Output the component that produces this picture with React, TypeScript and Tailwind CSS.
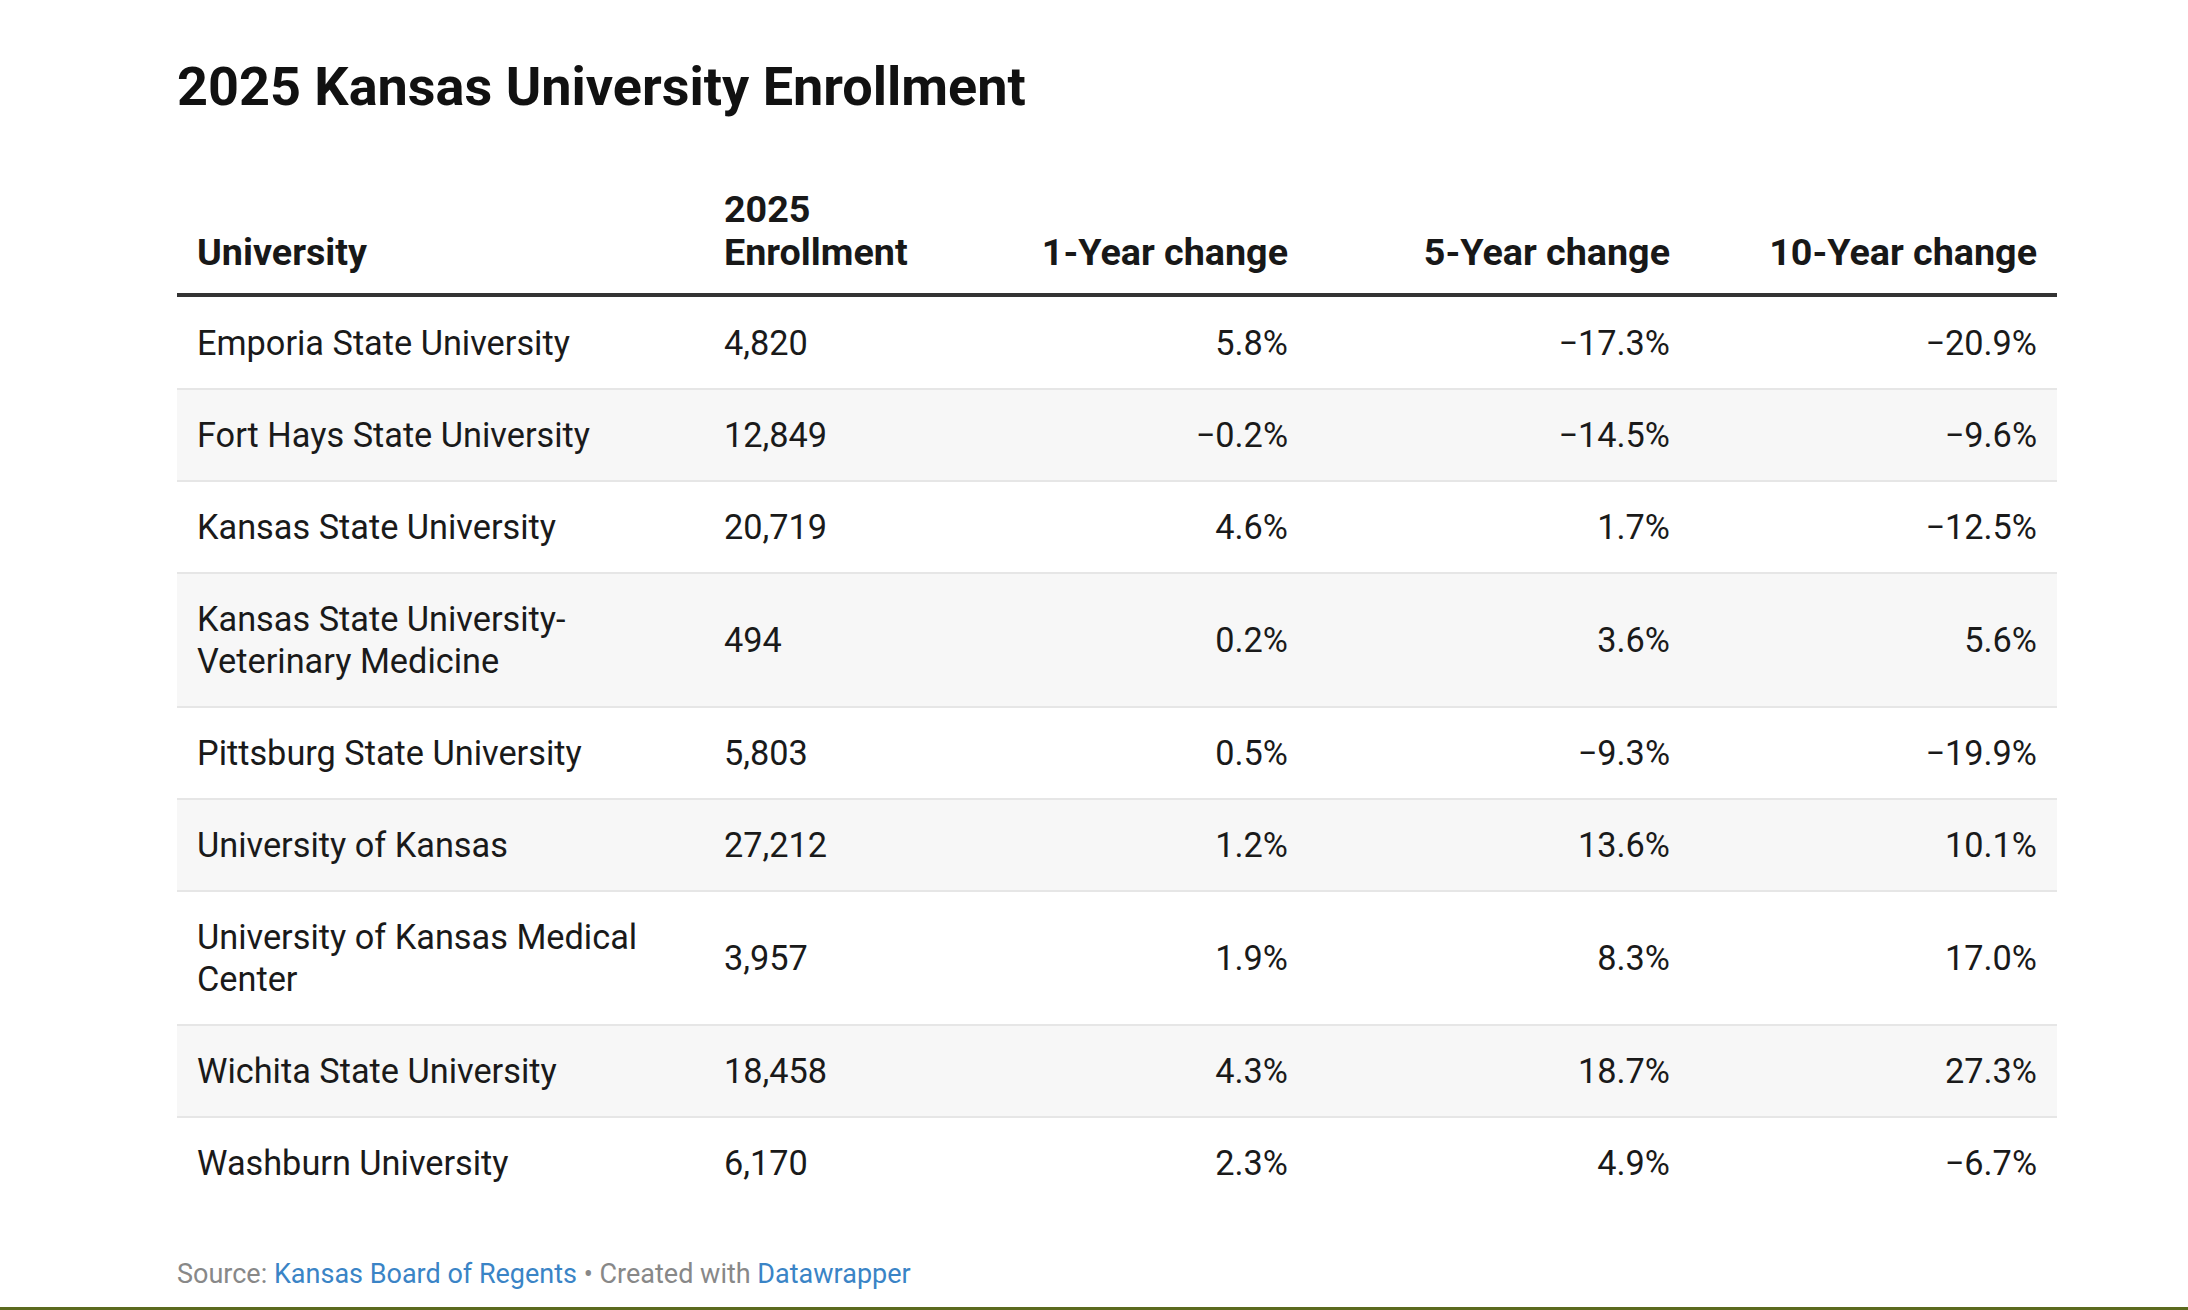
import React from "react";

type Row = { name: string; enr: string; y1: string; y5: string; y10: string };

const rows: Row[] = [
  { name: "Emporia State University", enr: "4,820", y1: "5.8%", y5: "\u221217.3%", y10: "\u221220.9%" },
  { name: "Fort Hays State University", enr: "12,849", y1: "\u22120.2%", y5: "\u221214.5%", y10: "\u22129.6%" },
  { name: "Kansas State University", enr: "20,719", y1: "4.6%", y5: "1.7%", y10: "\u221212.5%" },
  { name: "Kansas State University-Veterinary Medicine", enr: "494", y1: "0.2%", y5: "3.6%", y10: "5.6%" },
  { name: "Pittsburg State University", enr: "5,803", y1: "0.5%", y5: "\u22129.3%", y10: "\u221219.9%" },
  { name: "University of Kansas", enr: "27,212", y1: "1.2%", y5: "13.6%", y10: "10.1%" },
  { name: "University of Kansas Medical Center", enr: "3,957", y1: "1.9%", y5: "8.3%", y10: "17.0%" },
  { name: "Wichita State University", enr: "18,458", y1: "4.3%", y5: "18.7%", y10: "27.3%" },
  { name: "Washburn University", enr: "6,170", y1: "2.3%", y5: "4.9%", y10: "\u22126.7%" },
];

export default function App() {
  return (
    <div
      className="w-[2188px] h-[1310px] bg-white flex flex-col text-[#1a1a1a]"
      style={{ fontFamily: "Roboto, 'Liberation Sans', sans-serif" }}
    >
      <div className="pl-[177px] pt-[55px] w-[2057px] box-content">
        <h1 className="text-[54px] leading-[64px] font-bold text-[#111]">
          2025 Kansas University Enrollment
        </h1>
        <table className="mt-[69px] w-[1880px] table-fixed border-collapse">
          <colgroup>
            <col className="w-[507px]" />
            <col className="w-[262px]" />
            <col className="w-[382px]" />
            <col className="w-[382px]" />
            <col className="w-[347px]" />
          </colgroup>
          <thead>
            <tr className="text-[37.7px] leading-[43px] font-bold text-[#181818] align-bottom">
              <th className="text-left pl-[20px] pr-[20px] pb-[19px] border-b-4 border-[#333]">University</th>
              <th className="text-left pl-[40px] pb-[19px] border-b-4 border-[#333]">
                2025
                <br />
                Enrollment
              </th>
              <th className="text-right pr-[40px] pb-[19px] border-b-4 border-[#333] whitespace-nowrap">1-Year change</th>
              <th className="text-right pr-[40px] pb-[19px] border-b-4 border-[#333] whitespace-nowrap">5-Year change</th>
              <th className="text-right pr-[20px] pb-[19px] border-b-4 border-[#333] whitespace-nowrap">10-Year change</th>
            </tr>
          </thead>
          <tbody className="text-[34.3px] leading-[42px]">
            {rows.map((r, i) => {
              const last = i === rows.length - 1;
              const bg = i % 2 === 1 ? "bg-[#f7f7f7]" : "bg-white";
              const bd = last ? "" : "border-b-2 border-[#e6e6e6]";
              const pt = i === 0 ? "pt-[25px]" : "pt-[24px]";
              return (
                <tr key={r.name} className={`${bg} ${bd} align-middle`}>
                  <td className={`pl-[20px] pr-[20px] ${pt} pb-[24px]`}>{r.name}</td>
                  <td className={`pl-[40px] ${pt} pb-[24px]`}>{r.enr}</td>
                  <td className={`text-right pr-[40px] ${pt} pb-[24px]`}>{r.y1}</td>
                  <td className={`text-right pr-[40px] ${pt} pb-[24px]`}>{r.y5}</td>
                  <td className={`text-right pr-[20px] ${pt} pb-[24px]`}>{r.y10}</td>
                </tr>
              );
            })}
          </tbody>
        </table>
        <div className="mt-[50px] text-[27px] leading-[32px] text-[#888]">
          Source: <span className="text-[#3a84c6]">Kansas Board of Regents</span> • Created with{" "}
          <span className="text-[#3a84c6]">Datawrapper</span>
        </div>
      </div>
      <div className="mt-auto h-[3px] w-full bg-[#5b6a1e]" />
    </div>
  );
}
